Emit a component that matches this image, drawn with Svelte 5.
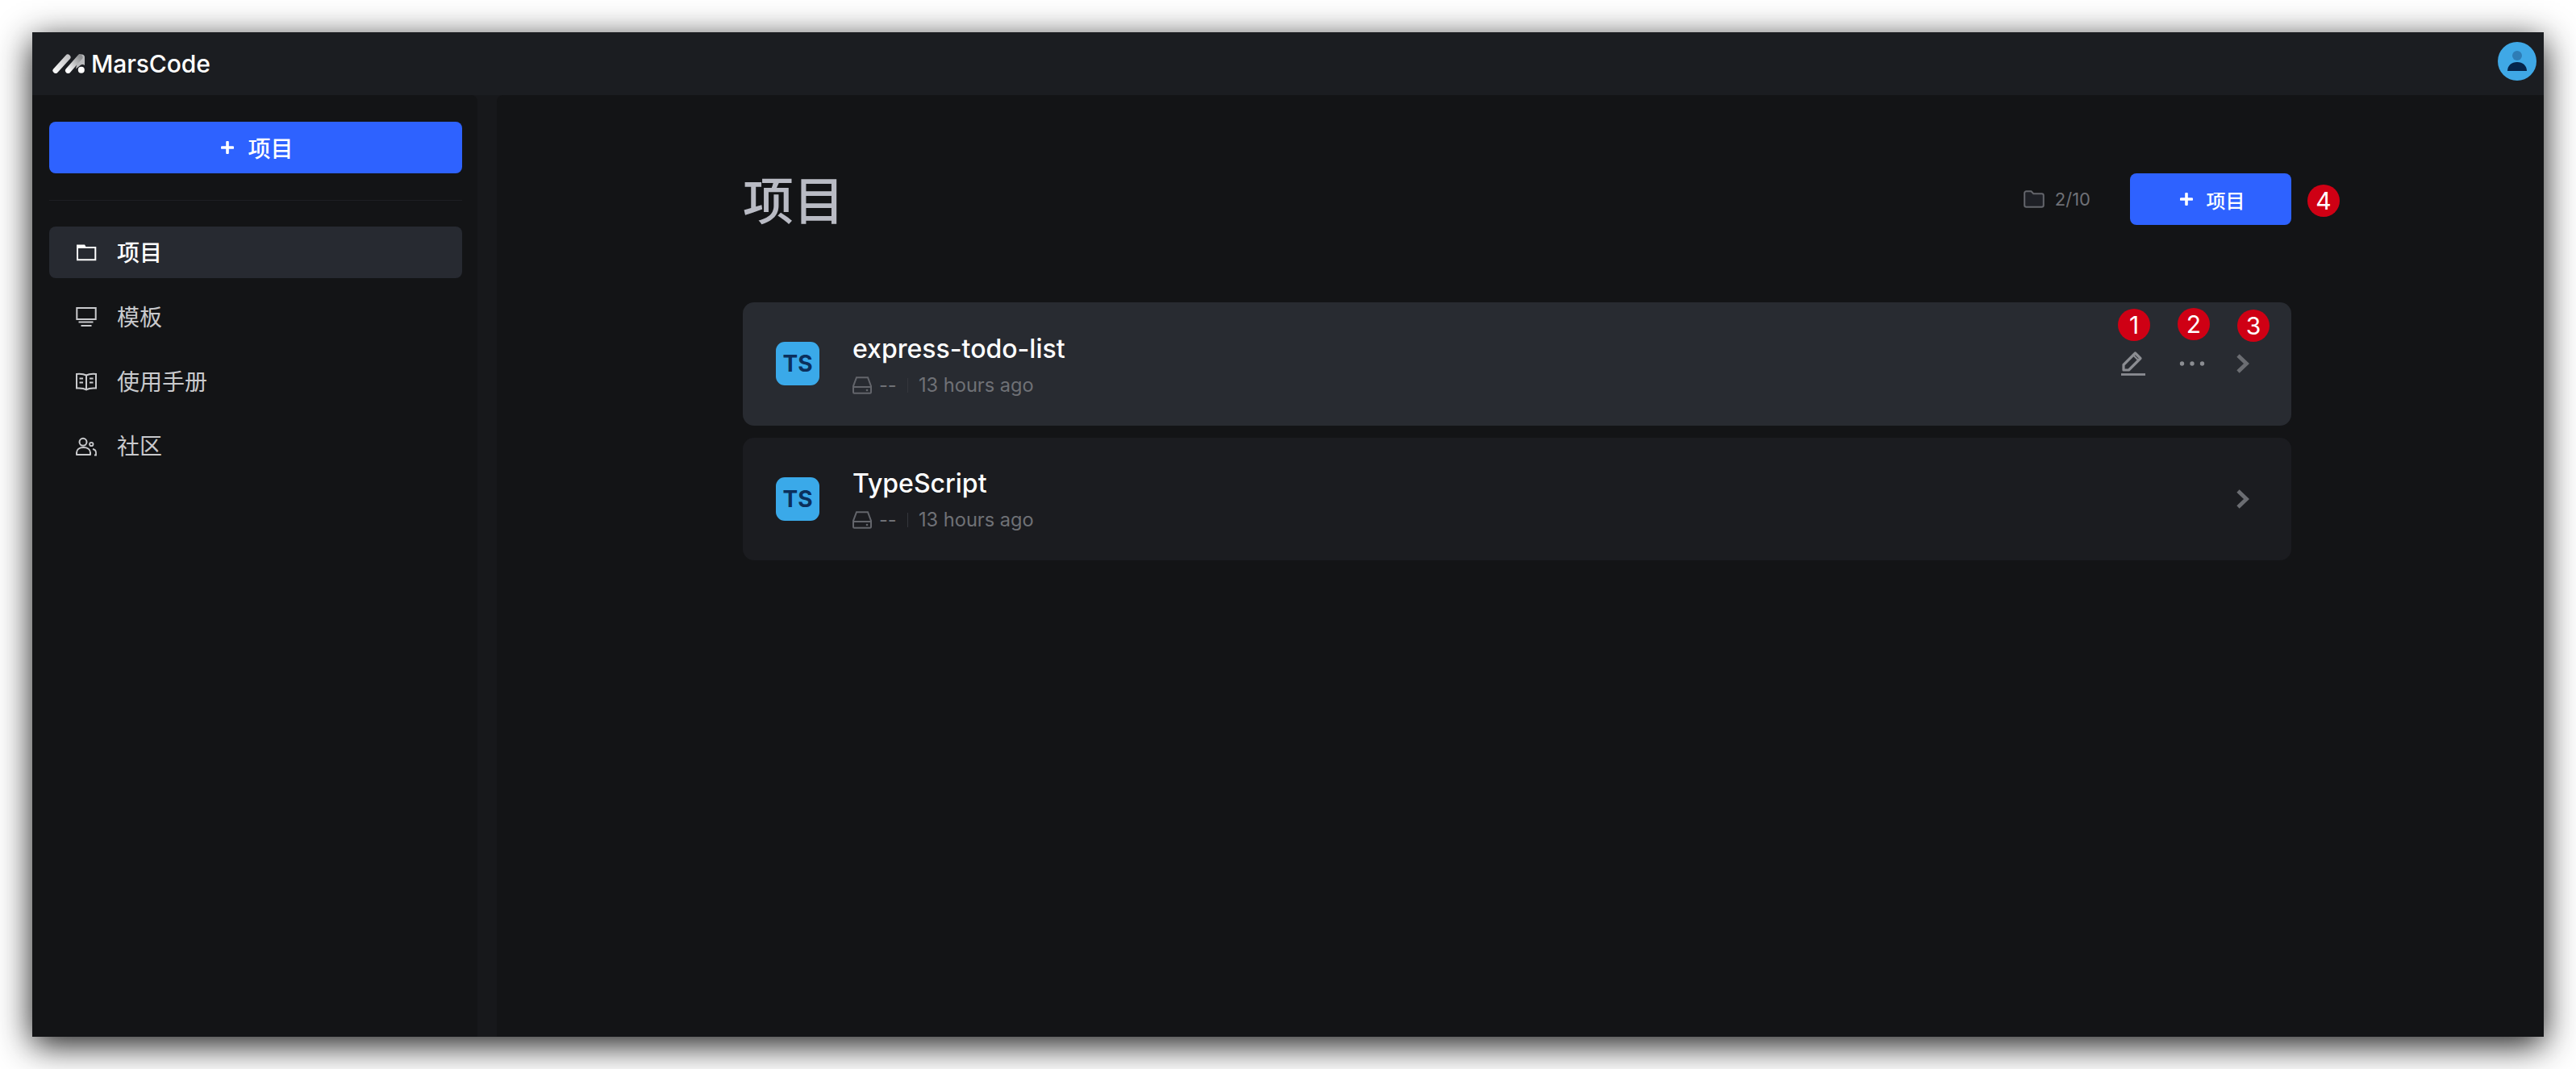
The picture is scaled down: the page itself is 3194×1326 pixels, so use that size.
<script>
  const nav = [
    { key: "folder", label: "项目", active: true },
    { key: "monitor", label: "模板" },
    { key: "book", label: "使用手册" },
    { key: "users", label: "社区" },
  ];

  const projects = [
    { name: "express-todo-list", time: "13 hours ago", hover: true },
    { name: "TypeScript", time: "13 hours ago" },
  ];
</script>

{#snippet plus()}
  <svg class="plus" viewBox="0 0 16 16" aria-hidden="true">
    <path d="M8 1.5v13M1.5 8h13" fill="none" stroke="currentColor" stroke-width="3.6" stroke-linecap="round" />
  </svg>
{/snippet}

{#snippet navIcon(key)}
  <svg class="nav-icon" viewBox="0 0 28 28" fill="none" stroke="currentColor" stroke-width="2" aria-hidden="true">
    {#if key === "folder"}
      <path d="M3 8h22.300v15.300H3z" />
      <path d="M2 4.500h10l2 3.500H2z" fill="currentColor" stroke="none" />
    {:else if key === "monitor"}
      <path d="M2.300 3h23.400v14H2.300z" />
      <path d="M4.500 20.500h18M7.500 25h13" stroke-width="2.200" />
    {:else if key === "book"}
      <path d="M14 6.500C11 5 6 4.700 2 5v17.500c4-.3 9 0 12 2 3-2 8-2.300 12-2V5c-4-.3-9 0-12 1.500z" />
      <path d="M14 6.500v18M5.500 10.500h4.500M5.500 15.500h4.500M18 10.500h4.500M18 15.500h4.500" />
    {:else}
      <circle cx="10" cy="9.300" r="4.500" />
      <path d="M2 25v-2.500c0-4 3.500-6.500 8.500-6.500s8.500 2.500 8.500 6.500V25z" stroke-linejoin="round" />
      <circle cx="20.300" cy="12" r="2.200" stroke-width="1.800" />
      <path d="M22 18c2.500.5 4 2 4 4.500V25.500h-2" stroke-width="1.800" />
    {/if}
  </svg>
{/snippet}

<div class="window">
  <header class="topbar">
    <div class="brand">
      <svg class="logo" viewBox="0 0 40 24" aria-hidden="true">
        <defs>
          <linearGradient id="mars-a" x1="0" y1="1" x2="1" y2="0">
            <stop offset="0" stop-color="#f6f6f6" />
            <stop offset="1" stop-color="#c4c4c6" />
          </linearGradient>
          <linearGradient id="mars-b" x1="0" y1="1" x2="1" y2="0">
            <stop offset="0" stop-color="#ffffff" />
            <stop offset="1" stop-color="#8f9092" />
          </linearGradient>
        </defs>
        <path d="M33 0.500h3.500c2 0 3.500 1.500 3.500 3.500v10c-2-1.500-4-1.500-6 .5l-5 4z" fill="#b9babc" />
        <path d="M4 20.500 19 4" stroke="url(#mars-a)" stroke-width="7" stroke-linecap="round" fill="none" />
        <path d="M19.500 20.500 34 4" stroke="url(#mars-b)" stroke-width="7" stroke-linecap="round" fill="none" />
        <circle cx="35.800" cy="19.800" r="4" fill="#fff" />
      </svg>
      <span class="brand-name">MarsCode</span>
    </div>
    <svg class="avatar" viewBox="0 0 48 48" aria-hidden="true">
      <circle cx="24" cy="24" r="24" fill="#3fa8e6" />
      <circle cx="24" cy="17" r="6" fill="#2e7db6" />
      <path d="M12 36c0-6.500 5-11 12-11s12 4.500 12 11z" fill="#05244a" />
    </svg>
  </header>

  <div class="body">
    <aside class="sidebar">
      <button class="primary wide">{@render plus()}<span>项目</span></button>
      <div class="divider"></div>
      <nav class="nav">
        {#each nav as item}
          <div class="nav-item" class:active={item.active}>
            {@render navIcon(item.key)}
            <span>{item.label}</span>
          </div>
        {/each}
      </nav>
    </aside>

    <div class="gutter"></div>

    <main class="main">
      <div class="head">
        <h1>项目</h1>
        <div class="quota">
          <svg class="quota-icon" viewBox="0 0 26 22" aria-hidden="true">
            <path d="M1.200 3.500c0-1.200 1-2.300 2.300-2.300h6l2.800 3h10.200c1.300 0 2.300 1 2.300 2.300v12c0 1.300-1 2.300-2.300 2.300H3.500c-1.300 0-2.300-1-2.300-2.300z" fill="#1e2026" stroke="#63656b" stroke-width="2" />
          </svg>
          <span>2/10</span>
        </div>
        <button class="primary small">{@render plus()}<span>项目</span></button>
        <span class="badge badge-4">4</span>
      </div>

      <div class="list">
        {#each projects as project}
          <div class="card" class:hover={project.hover}>
            <div class="ts">TS</div>
            <div class="info">
              <div class="name">{project.name}</div>
              <div class="meta">
                <svg class="disk" viewBox="0 0 24 22" aria-hidden="true">
                  <path d="M5 1.200h14L23 12v7.500c0 .8-.6 1.300-1.300 1.300H2.300c-.7 0-1.300-.5-1.300-1.300V12zM1 13h22" fill="none" stroke="#63656b" stroke-width="2" />
                  <circle cx="18" cy="17" r="1.300" fill="#63656b" />
                </svg>
                <span class="dash">--</span>
                <span class="sep"></span>
                <span>{project.time}</span>
              </div>
            </div>
            <div class="actions">
              {#if project.hover}
                <svg class="action pencil" viewBox="0 0 32 32" aria-hidden="true">
                  <path d="M4 17.500v6.500h6.500L25 9.500 18.500 3z" fill="none" stroke="#8b8d92" stroke-width="3.200" stroke-linejoin="round" />
                  <path d="M16.500 6l6 6" stroke="#8b8d92" stroke-width="2" />
                  <path d="M1 29.500h30" stroke="#8b8d92" stroke-width="2.800" />
                </svg>
                <svg class="action dots" viewBox="0 0 32 32" aria-hidden="true">
                  <circle cx="3.500" cy="16" r="2.700" fill="#8b8d92" />
                  <circle cx="16" cy="16" r="2.700" fill="#8b8d92" />
                  <circle cx="28.500" cy="16" r="2.700" fill="#8b8d92" />
                </svg>
              {/if}
              <svg class="action chevron" viewBox="0 0 32 32" aria-hidden="true">
                <path d="M10 6l10.500 10L10 26" fill="none" stroke="#6b6d72" stroke-width="4.800" />
              </svg>
            </div>
            {#if project.hover}
              <span class="badge badge-1">1</span>
              <span class="badge badge-2">2</span>
              <span class="badge badge-3">3</span>
            {/if}
          </div>
        {/each}
      </div>
    </main>
  </div>
</div>

<style>
  :global(body) {
    margin: 0;
    background: #fff;
    overflow: hidden;
  }

  .window {
    margin: 40px;
    height: 1246px;
    display: flex;
    flex-direction: column;
    background: #1b1d21;
    box-shadow: 0 10px 40px rgba(0, 0, 0, 0.9);
    font-family: Inter, "Noto Sans CJK SC", sans-serif;
    color: #fff;
  }

  .topbar {
    height: 78px;
    flex: none;
    display: flex;
    align-items: center;
    justify-content: space-between;
    padding: 0 9px 0 25px;
  }
  .brand {
    display: flex;
    align-items: center;
    gap: 8px;
  }
  .logo {
    width: 40px;
    height: 24px;
  }
  .brand-name {
    font-size: 30px;
    font-weight: 500;
    letter-spacing: -0.1px;
  }
  .avatar {
    width: 48px;
    height: 48px;
    margin-top: -6px;
  }

  .body {
    flex: 1;
    display: flex;
    min-height: 0;
    background: #17181b;
  }

  .sidebar {
    width: 552px;
    flex: none;
    box-sizing: border-box;
    padding: 33px 19px 0 21px;
    background: #131416;
    border-radius: 0 8px 0 0;
  }
  .gutter {
    width: 24px;
    flex: none;
  }

  .primary {
    display: flex;
    align-items: center;
    justify-content: center;
    height: 64px;
    padding: 0 0 0 4px;
    border: 0;
    border-radius: 8px;
    background: #2e62ff;
    color: #fff;
    font-family: inherit;
  }
  .primary.wide {
    width: 100%;
    gap: 17px;
    font-size: 28px;
    font-weight: 500;
  }
  .primary.small {
    width: 200px;
    gap: 17px;
    font-size: 24px;
    font-weight: 500;
  }
  .plus {
    width: 16px;
    height: 16px;
  }

  .divider {
    height: 1px;
    margin: 33px 0 32px;
    background: #1e1f23;
  }

  .nav {
    display: flex;
    flex-direction: column;
    gap: 16px;
  }
  .nav-item {
    display: flex;
    align-items: center;
    gap: 24px;
    height: 64px;
    padding-left: 32px;
    border-radius: 8px;
    font-size: 28px;
    color: #c9cacd;
  }
  .nav-item span {
    padding-bottom: 3px;
  }
  .nav-item.active {
    background: #272a31;
    color: #fff;
    font-weight: 500;
  }
  .nav-icon {
    width: 28px;
    height: 28px;
    flex: none;
  }

  .main {
    flex: 1;
    box-sizing: border-box;
    padding: 97px 313px 0 305px;
    background: #131416;
    border-radius: 8px 0 0 0;
  }

  .head {
    position: relative;
    display: flex;
    align-items: center;
    height: 64px;
  }
  h1 {
    flex: 1;
    margin: -5px 0 0 0;
    font-size: 63px;
    font-weight: 500;
    color: #b9bbc4;
  }
  .quota {
    display: flex;
    align-items: center;
    gap: 13px;
    margin-right: 49px;
    font-size: 22px;
    color: #6f7176;
  }
  .quota-icon {
    width: 26px;
    height: 22px;
  }

  .list {
    display: flex;
    flex-direction: column;
    gap: 15px;
    margin-top: 96px;
  }
  .card {
    position: relative;
    display: flex;
    align-items: center;
    gap: 41px;
    height: 152.5px;
    padding: 0 44px 0 41px;
    border-radius: 14px;
    background: #1b1c20;
  }
  .card.hover {
    background: #282b31;
  }

  .ts {
    width: 54px;
    height: 54px;
    flex: none;
    display: flex;
    align-items: center;
    justify-content: center;
    border-radius: 11px;
    background: #3aa9e9;
    color: #0b2f5c;
    font-size: 28px;
    font-weight: 700;
  }

  .info {
    flex: 1;
    padding-top: 4px;
  }
  .name {
    font-size: 32px;
    font-weight: 500;
    line-height: 40px;
    color: #fff;
  }
  .meta {
    display: flex;
    align-items: center;
    margin-top: 9px;
    font-size: 23.6px;
    line-height: 32px;
    color: #6f7176;
    white-space: nowrap;
  }
  .disk {
    width: 24px;
    height: 22px;
    margin-right: 9px;
  }
  .dash {
    width: 22px;
  }
  .sep {
    width: 1px;
    height: 18px;
    margin: 0 13px;
    background: #34363c;
  }

  .actions {
    display: flex;
    align-items: center;
    gap: 41px;
  }
  .action {
    width: 32px;
    height: 32px;
    flex: none;
  }
  .chevron {
    margin-left: -10px;
  }

  /* numbered callouts drawn over the screenshot */
  .badge {
    position: absolute;
    width: 40px;
    height: 40px;
    display: flex;
    align-items: center;
    justify-content: center;
    border-radius: 50%;
    background: #cf0014;
    color: #fff;
    font-size: 30px;
    font-weight: 400;
  }
  .badge-1 {
    left: 1705px;
    top: 8px;
  }
  .badge-2 {
    left: 1779px;
    top: 7px;
  }
  .badge-3 {
    left: 1853px;
    top: 9px;
  }
  .badge-4 {
    left: 1940px;
    top: 14px;
  }
</style>
